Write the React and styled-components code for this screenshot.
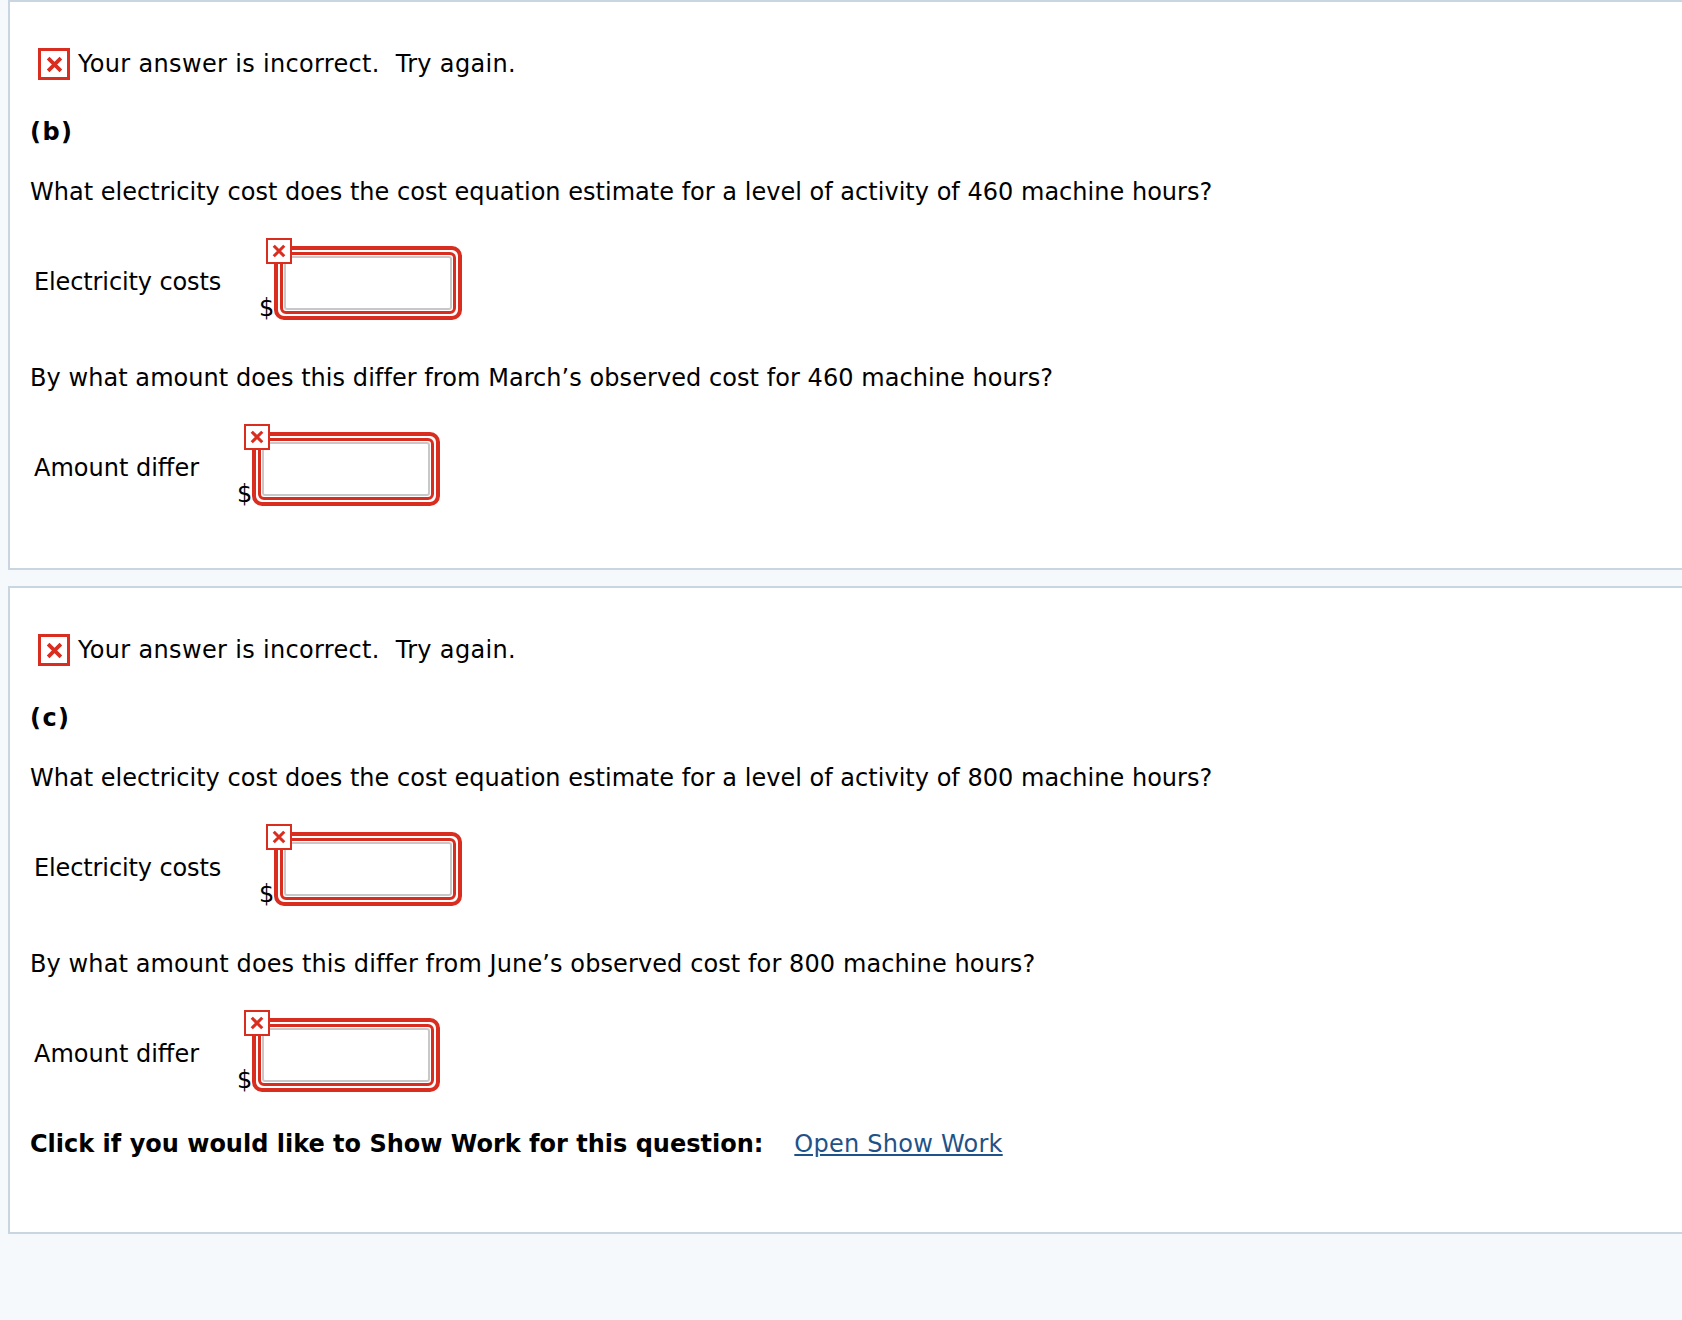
import React from "react"
import styled, { createGlobalStyle } from "styled-components"

const GlobalStyle = createGlobalStyle`
  html, body {
    margin: 0;
    padding: 0;
    background: #f5f9fc;
  }
  body {
    font-family: "DejaVu Sans", Verdana, sans-serif;
    font-size: 24px;
    color: #000;
    overflow: hidden;
  }
`

const Page = styled.div`
  min-height: 1320px;
  padding-left: 8px;
  display: flex;
  flex-direction: column;
  gap: 16px;
  box-sizing: border-box;
`

const Panel = styled.section`
  box-sizing: border-box;
  width: 1700px;
  height: ${(p) => p.$height}px;
  padding: 46px 0 0 20px;
  background: #fff;
  border: 2px solid #cad5e2;
  display: flex;
  flex-direction: column;
`

const Status = styled.div`
  display: flex;
  align-items: center;
  gap: 8px;
  height: 32px;
  padding-left: 8px;
  line-height: 32px;
  white-space: pre;
  letter-spacing: 0.33px;
`

const BigMark = styled.span`
  box-sizing: border-box;
  width: 32px;
  height: 32px;
  border: 3px solid #d92d20;
  display: flex;
  align-items: center;
  justify-content: center;
  background: #fff;
`

const PartLabel = styled.div`
  font-weight: 700;
  margin-top: 36px;
  line-height: 32px;
  letter-spacing: 1.4px;
`

const Question = styled.p`
  margin: ${(p) => p.$top}px 0 0;
  line-height: 32px;
  white-space: nowrap;
  letter-spacing: ${(p) => p.$spacing}px;
`

const AnswerRow = styled.div`
  display: flex;
  align-items: flex-start;
  height: 74px;
  margin-top: 38px;
  padding-left: 4px;
`

const FieldLabel = styled.span`
  width: ${(p) => p.$width}px;
  line-height: 32px;
  margin-top: 20px;
  flex: none;
  letter-spacing: ${(p) => p.$spacing}px;
`

const Dollar = styled.span`
  width: 15px;
  line-height: 32px;
  margin-top: 46px;
  flex: none;
`

const Frame = styled.div`
  position: relative;
  box-sizing: border-box;
  width: 188px;
  height: 74px;
  border: 4px solid #d92d20;
  border-radius: 10px;
  padding: 2px;
  background: #fff;
  display: flex;
`

const InnerRing = styled.div`
  flex: 1;
  min-width: 0;
  border: 3px solid #d92d20;
  border-radius: 6px;
  padding: 1px;
  display: flex;
`

const Input = styled.input`
  flex: 1;
  min-width: 0;
  width: 100%;
  box-sizing: border-box;
  border: 2px solid #c8c8c8;
  border-radius: 3px;
  background: #fff;
  padding: 0;
  outline: none;
`

const SmallMark = styled.span`
  position: absolute;
  left: -12px;
  top: -12px;
  box-sizing: border-box;
  width: 26px;
  height: 26px;
  border: 2px solid #d92d20;
  background: #fff;
  display: flex;
  align-items: center;
  justify-content: center;
`

const WorkRow = styled.div`
  display: flex;
  margin-top: 36px;
  line-height: 32px;
  white-space: nowrap;
`

const WorkLabel = styled.strong`
  font-weight: 700;
  margin-right: 31px;
`

const WorkLink = styled.a`
  color: #1f5288;
  text-decoration: underline;
  letter-spacing: 0.25px;
`

const Cross = ({ size }) => (
  <svg width={size} height={size} viewBox="0 0 16 16" aria-hidden="true">
    <path d="M2 2 L14 14 M14 2 L2 14" stroke="#d92d20" strokeWidth="3.5" fill="none" />
  </svg>
)

const Answer = ({ label, labelWidth, spacing }) => (
  <AnswerRow>
    <FieldLabel $width={labelWidth} $spacing={spacing}>{label}</FieldLabel>
    <Dollar>$</Dollar>
    <Frame>
      <SmallMark>
        <Cross size={14} />
      </SmallMark>
      <InnerRing>
        <Input type="text" aria-label={label} />
      </InnerRing>
    </Frame>
  </AnswerRow>
)

const Part = ({ letter, hours, month, height, spacing, children }) => (
  <Panel $height={height}>
    <Status>
      <BigMark>
        <Cross size={17} />
      </BigMark>
      {"Your answer is incorrect.  Try again."}
    </Status>
    <PartLabel>({letter})</PartLabel>
    <Question $top={28} $spacing={0.02}>
      What electricity cost does the cost equation estimate for a level of activity of {hours} machine hours?
    </Question>
    <Answer label="Electricity costs" labelWidth={225} spacing={-0.12} />
    <Question $top={42} $spacing={spacing}>
      By what amount does this differ from {month}’s observed cost for {hours} machine hours?
    </Question>
    <Answer label="Amount differ" labelWidth={203} spacing={0} />
    {children}
  </Panel>
)

export default function App() {
  return (
    <>
      <GlobalStyle />
      <Page>
        <Part letter="b" hours={460} month="March" height={570} spacing={0.06} />
        <Part letter="c" hours={800} month="June" height={648} spacing={0.1}>
          <WorkRow>
            <WorkLabel>Click if you would like to Show Work for this question:</WorkLabel>
            <WorkLink href="#">Open Show Work</WorkLink>
          </WorkRow>
        </Part>
      </Page>
    </>
  )
}
